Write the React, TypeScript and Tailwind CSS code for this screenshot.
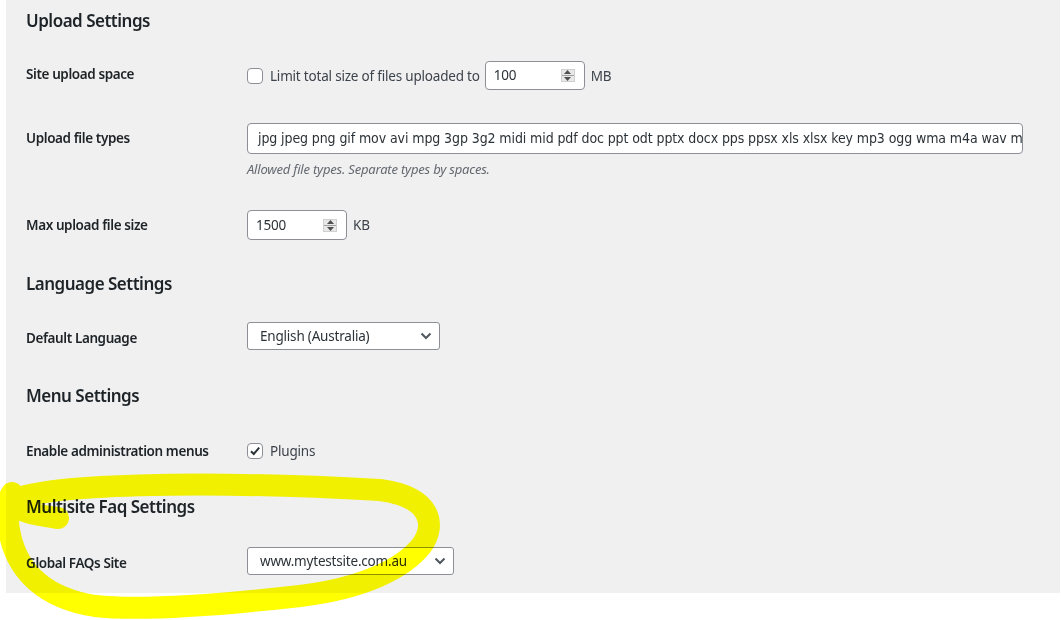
import React from "react";

const font = { fontFamily: '"Noto Sans", "Open Sans", sans-serif' };

function Spinner() {
  return (
    <span className="flex h-[13px] w-[14px] flex-col items-center justify-center gap-[1px] border border-[#d0d0d0] bg-[#e8e8e8]">
      <svg width="7" height="4" viewBox="0 0 7 4"><path d="M0 4 L3.5 0 L7 4 Z" fill="#505050" /></svg>
      <span className="h-px w-[12px] bg-[#a0a0a0]" />
      <svg width="7" height="4" viewBox="0 0 7 4"><path d="M0 0 L3.5 4 L7 0 Z" fill="#505050" /></svg>
    </span>
  );
}

function NumberBox({ value, width, height }: { value: string; width: string; height: string }) {
  return (
    <div className={`flex items-center justify-between rounded-[4px] border border-[#8c8f94] bg-white pl-[8px] pr-[9px] ${width} ${height}`}>
      <span className="text-[13.5px] tracking-[-0.2px] text-[#2c3338]">{value}</span>
      <Spinner />
    </div>
  );
}

function Select({ value, width }: { value: string; width: string }) {
  return (
    <div className={`flex h-[28px] items-center justify-between rounded-[3px] border border-[#8c8f94] bg-white pl-[12px] pr-[7px] ${width}`}>
      <span className="text-[13.5px] tracking-[-0.2px] text-[#2c3338]">{value}</span>
      <svg width="12" height="8" viewBox="0 0 12 8">
        <path d="M1.5 1.5 L6 6 L10.5 1.5" fill="none" stroke="#50575e" strokeWidth="2" />
      </svg>
    </div>
  );
}

function Label({ children, mt }: { children: React.ReactNode; mt: string }) {
  return (
    <div className={`w-[221px] shrink-0 text-[13.5px] font-semibold leading-[18px] tracking-[-0.4px] text-[#1d2327] ${mt}`}>{children}</div>
  );
}

function Heading({ children, mt }: { children: React.ReactNode; mt: string }) {
  return <h2 className={`h-[24px] pt-[1px] text-[17px] font-semibold leading-[24px] tracking-[-0.5px] text-[#1d2327] ${mt}`}>{children}</h2>;
}

export default function App() {
  return (
    <div className="relative h-[620px] w-[1061px] overflow-hidden bg-white" style={font}>
      <div className="ml-[6px] h-[593px] w-[1054px] bg-[#f0f0f1] pl-[20px]">
        <div className="h-[8px]" />
        <Heading mt="mt-0">Upload Settings</Heading>

        {/* Row 1 */}
        <div className="mt-[30px] flex items-start">
          <Label mt="mt-[3px]">Site upload space</Label>
          <div className="flex items-center">
            <span className="h-[16px] w-[16px] rounded-[4px] border border-[#8c8f94] bg-white" />
            <span className="ml-[7px] text-[13.5px] tracking-[-0.2px] text-[#3c434a]">Limit total size of files uploaded to</span>
            <div className="ml-[5px] mt-[-1px]">
              <NumberBox value="100" width="w-[100px]" height="h-[29px]" />
            </div>
            <span className="ml-[6px] text-[13.5px] tracking-[-0.2px] text-[#3c434a]">MB</span>
          </div>
        </div>

        {/* Row 2 */}
        <div className="mt-[33px] flex items-start">
          <Label mt="mt-[6px]">Upload file types</Label>
          <div className="flex flex-col">
            <div className="flex h-[31px] w-[776px] items-center overflow-hidden whitespace-nowrap rounded-[4px] border border-[#8c8f94] bg-white px-[10px]">
              <span className="text-[14px] tracking-[-0.1px] text-[#2c3338]" style={{ fontFamily: '"Liberation Sans Narrow", "DejaVu Sans Condensed", "Noto Sans", sans-serif' }}>
                jpg jpeg png gif mov avi mpg 3gp 3g2 midi mid pdf doc ppt odt pptx docx pps ppsx xls xlsx key mp3 ogg wma m4a wav mp4 m4v webm ogv flv
              </span>
            </div>
            <p className="mt-[6px] text-[13px] italic leading-[18px] tracking-[-0.2px] text-[#646970]">Allowed file types. Separate types by spaces.</p>
          </div>
        </div>

        {/* Row 3 */}
        <div className="mt-[32px] flex items-start">
          <Label mt="mt-[6px]">Max upload file size</Label>
          <div className="flex items-center">
            <NumberBox value="1500" width="w-[100px]" height="h-[30px]" />
            <span className="ml-[6px] text-[13.5px] tracking-[-0.2px] text-[#3c434a]">KB</span>
          </div>
        </div>

        <Heading mt="mt-[31px]">Language Settings</Heading>

        <div className="mt-[27px] flex items-start">
          <Label mt="mt-[7px]">Default Language</Label>
          <Select value="English (Australia)" width="w-[193px]" />
        </div>

        <Heading mt="mt-[33px]">Menu Settings</Heading>

        <div className="mt-[34px] flex items-start">
          <Label mt="mt-[1px]">Enable administration menus</Label>
          <div className="flex items-center">
            <span className="flex h-[16px] w-[16px] items-center justify-center rounded-[4px] border border-[#8c8f94] bg-white">
              <svg width="12" height="12" viewBox="0 0 12 12">
                <path d="M2 6.2 L4.8 9 L10.2 2.6" fill="none" stroke="#2c3338" strokeWidth="2" />
              </svg>
            </span>
            <span className="ml-[7px] text-[13.5px] tracking-[-0.2px] text-[#3c434a]">Plugins</span>
          </div>
        </div>

        <Heading mt="mt-[33px]">Multisite Faq Settings</Heading>

        <div className="mt-[29px] flex items-start">
          <Label mt="mt-[7px]">Global FAQs Site</Label>
          <Select value="www.mytestsite.com.au" width="w-[207px]" />
        </div>
      </div>

      <svg className="pointer-events-none absolute left-0 top-0 mix-blend-multiply" width="1061" height="620" viewBox="0 0 1061 620">
        <path
          d="M58 518 C35 515 14 511 12 501 C40 484 200 480 380 490 C432 497 436 525 422 545 C404 568 365 588 300 596 C220 605 140 611 95 606 C45 598 18 572 10 535 C6 515 6 502 12 493"
          fill="none"
          stroke="#ffff00"
          strokeWidth="22"
          strokeLinecap="round"
          strokeLinejoin="round"
        />
      </svg>
    </div>
  );
}
